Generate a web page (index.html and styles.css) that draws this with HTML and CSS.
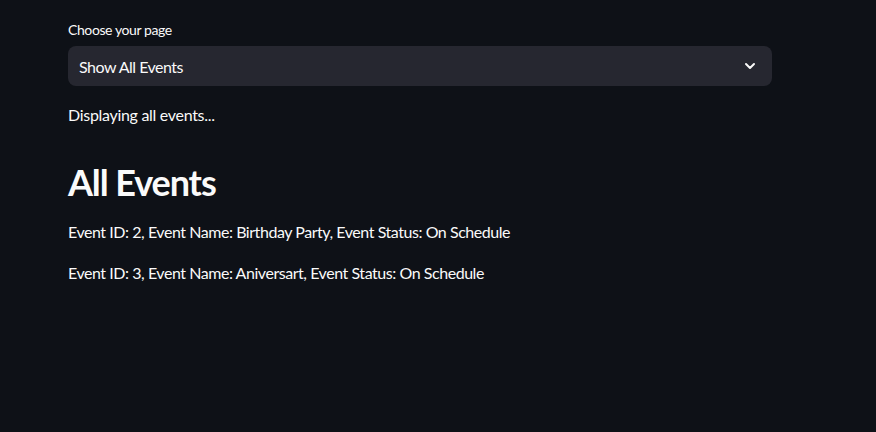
FILE: index.html
```html
<!DOCTYPE html>
<html>
<head>
<meta charset="utf-8">
<link rel="stylesheet" href="styles.css">
</head>
<body>
<main class="main">
  <div class="field">
    <label class="label">Choose your page</label>
    <div class="select">
      <span class="select-value">Show All Events</span>
      <svg class="chevron" width="16" height="16" viewBox="0 0 24 24"><path d="M6 9l6 6 6-6" fill="none" stroke="#fafafa" stroke-width="3" stroke-linecap="round" stroke-linejoin="round"/></svg>
    </div>
  </div>
  <p class="text status">Displaying all events...</p>
  <h2 class="heading">All Events</h2>
  <p class="text">Event ID: 2, Event Name: Birthday Party, Event Status: On Schedule</p>
  <p class="text">Event ID: 3, Event Name: Aniversart, Event Status: On Schedule</p>
</main>
</body>
</html>
```
FILE: styles.css
```css
html, body {
  margin: 0;
  background: #0e1117;
  color: #fafafa;
  font-family: "Lato", "Liberation Sans", sans-serif;
}
.main {
  width: 704px;
  padding: 21px 0 0 68px;
}
.field {
  display: flex;
  flex-direction: column;
}
.label {
  font-size: 14px;
  line-height: 18px;
  margin-bottom: 7px;
  letter-spacing: -0.4px;
}
.select {
  height: 40px;
  background: #262730;
  border-radius: 8px;
  display: flex;
  align-items: center;
  justify-content: space-between;
  padding: 0 14px 0 11px;
}
.select-value {
  font-size: 16px;
  letter-spacing: -0.5px;
}
.chevron {
  display: block;
}
.text {
  font-size: 16px;
  line-height: 24px;
  margin: 0 0 17px;
  letter-spacing: -0.45px;
}
.status {
  margin-top: 17px;
  letter-spacing: -0.3px;
}
.heading {
  font-size: 36px;
  font-weight: 700;
  line-height: 44px;
  margin: 33px 0 16px;
  letter-spacing: -1.1px;
}
```
